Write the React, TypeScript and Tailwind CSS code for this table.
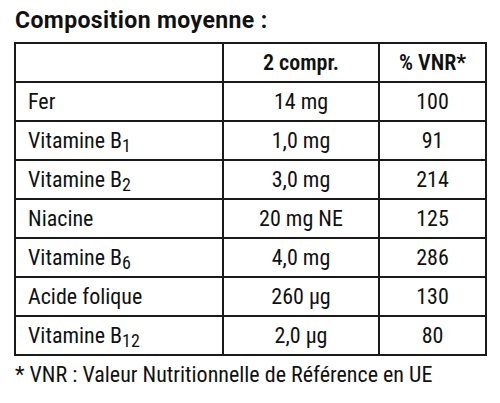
import React from "react";

const rows = [
  { name: "Fer", sub: "", amount: "14 mg", vnr: "100" },
  { name: "Vitamine B", sub: "1", amount: "1,0 mg", vnr: "91" },
  { name: "Vitamine B", sub: "2", amount: "3,0 mg", vnr: "214" },
  { name: "Niacine", sub: "", amount: "20 mg NE", vnr: "125" },
  { name: "Vitamine B", sub: "6", amount: "4,0 mg", vnr: "286" },
  { name: "Acide folique", sub: "", amount: "260 µg", vnr: "130" },
  { name: "Vitamine B", sub: "12", amount: "2,0 µg", vnr: "80" },
];

export default function App() {
  return (
    <div className="w-[500px] h-[403px] bg-white text-[#111] font-['Roboto_Condensed','Liberation_Sans',sans-serif] pl-[14px] pt-[6px]">
      <h1 className="font-['Roboto',sans-serif] text-[23px] tracking-[0.4px] font-bold leading-[30px] pl-[1px]">Composition moyenne :</h1>
      <table className="mt-[6px] border-collapse border-2 border-[#1a1a1a] text-[22px]">
        <thead>
          <tr className="h-[39px]">
            <th className="w-[208px] border-2 border-[#1a1a1a]"></th>
            <th className="w-[156px] border-2 border-[#1a1a1a] font-semibold text-center leading-none">2 compr.</th>
            <th className="w-[107px] border-2 border-[#1a1a1a] font-semibold text-center leading-none">% VNR*</th>
          </tr>
        </thead>
        <tbody>
          {rows.map((r) => (
            <tr key={r.name + r.sub} className="h-[39px]">
              <td className="border-2 border-[#1a1a1a] pl-[12px] leading-none">
                {r.name}
                {r.sub && <sub className="text-[18px] relative top-[4px]">{r.sub}</sub>}
              </td>
              <td className="border-2 border-[#1a1a1a] text-center leading-none">{r.amount}</td>
              <td className="border-2 border-[#1a1a1a] text-center leading-none">{r.vnr}</td>
            </tr>
          ))}
        </tbody>
      </table>
      <p className="mt-[4px] text-[22px] leading-[30px] pl-[1px]">* VNR : Valeur Nutritionnelle de Référence en UE</p>
    </div>
  );
}
